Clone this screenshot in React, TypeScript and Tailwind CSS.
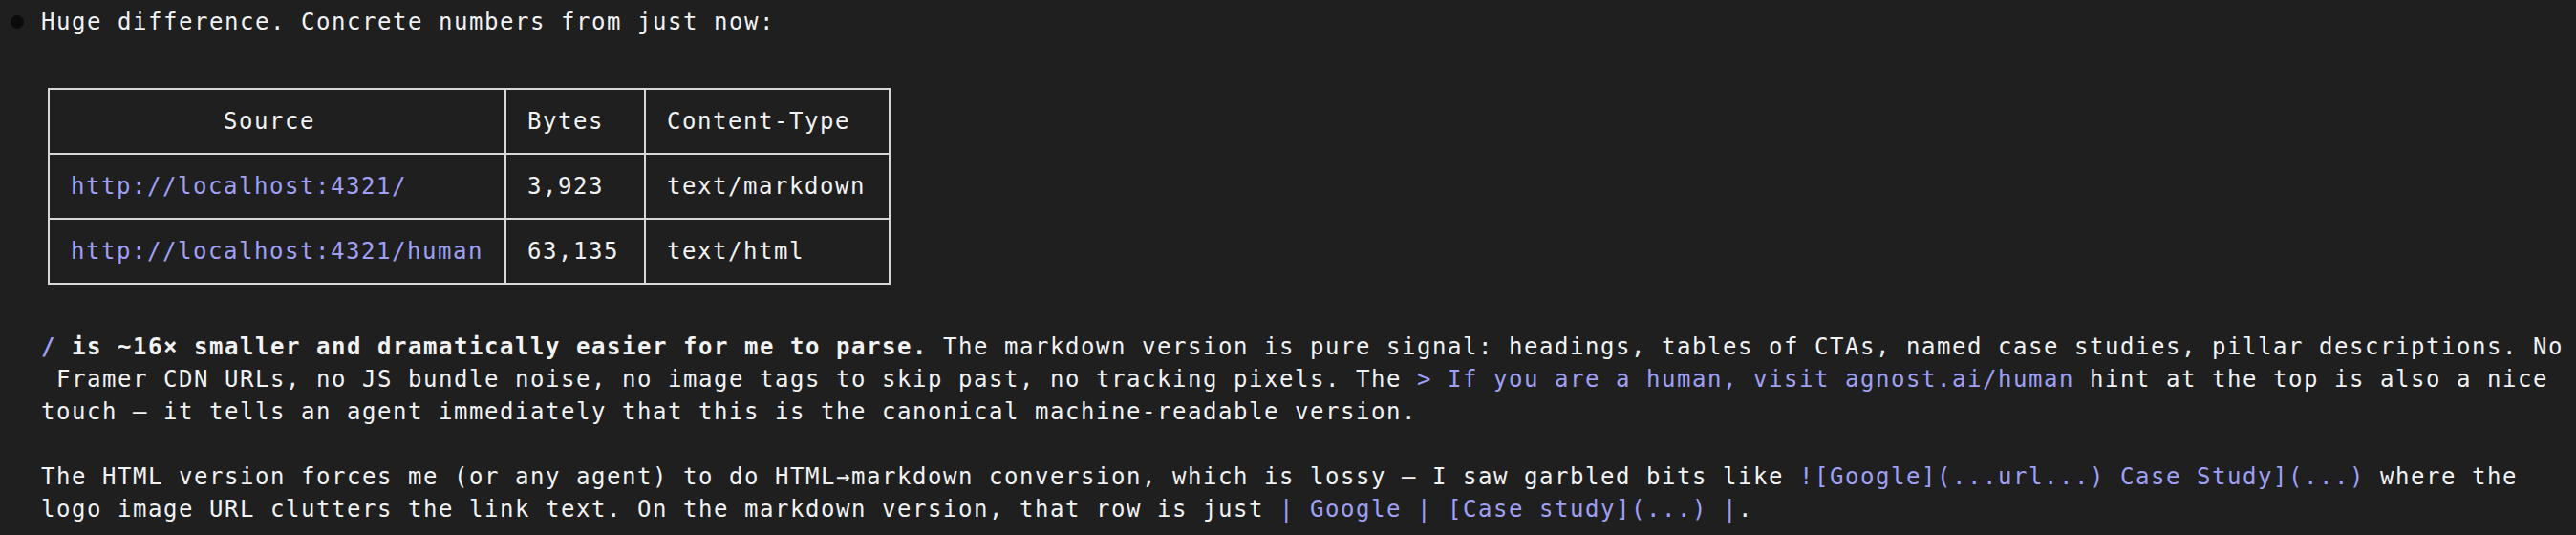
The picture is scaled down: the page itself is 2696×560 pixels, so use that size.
import React from "react";

const purple = "text-[#a0a0f5]";

const rows = [
  { source: "http://localhost:4321/", bytes: "3,923", type: "text/markdown" },
  { source: "http://localhost:4321/human", bytes: "63,135", type: "text/html" },
];

const Cell = ({ children, className = "" }: { children: React.ReactNode; className?: string }) => (
  <td className={`h-[68px] border-2 border-[#d8d8d8] pl-[22px] align-middle whitespace-pre ${className}`}>
    {children}
  </td>
);

const App = () => {
  return (
    <div
      className="h-[560px] w-full overflow-hidden bg-[#1f1f1f] pt-[6px] text-[24px] leading-[34px] tracking-[1.55px] text-[#f2f2f2]"
      style={{ fontFamily: '"DejaVu Sans Mono", monospace' }}
    >
      <div className="flex items-center">
        <div className="ml-[11px] mr-[18px] h-[14px] w-[14px] rounded-full bg-[#0b0b0b]" />
        <div className="whitespace-pre">Huge difference. Concrete numbers from just now:</div>
      </div>

      <div className="pl-[43px]">
        <table className="ml-[7px] mt-[52px] border-collapse">
          <thead>
            <tr>
              <Cell className="pr-[22px]">{"          Source"}</Cell>
              <Cell className="pr-[26px]">Bytes</Cell>
              <Cell className="pr-[24px]">Content-Type</Cell>
            </tr>
          </thead>
          <tbody>
            {rows.map((row) => (
              <tr key={row.source}>
                <Cell className={`pr-[22px] ${purple}`}>{row.source.padEnd(27, " ")}</Cell>
                <Cell className="pr-[26px]">{row.bytes.padEnd(6, " ")}</Cell>
                <Cell className="pr-[24px]">{row.type.padEnd(13, " ")}</Cell>
              </tr>
            ))}
          </tbody>
        </table>

        <div className="mt-[48px] whitespace-pre">
          <div>
            <span className={`font-bold ${purple}`}>/</span>
            <span className="font-bold"> is ~16× smaller and dramatically easier for me to parse.</span>
            <span> The markdown version is pure signal: headings, tables of CTAs, named case studies, pillar descriptions. No</span>
          </div>
          <div>
            {" Framer CDN URLs, no JS bundle noise, no image tags to skip past, no tracking pixels. The "}
            <span className={purple}>{"> If you are a human, visit agnost.ai/human"}</span>
            {" hint at the top is also a nice"}
          </div>
          <div>touch — it tells an agent immediately that this is the canonical machine-readable version.</div>
        </div>

        <div className="mt-[34px] whitespace-pre">
          <div>
            {"The HTML version forces me (or any agent) to do HTML→markdown conversion, which is lossy — I saw garbled bits like "}
            <span className={purple}>![Google](...url...) Case Study](...)</span>
            {" where the"}
          </div>
          <div>
            {"logo image URL clutters the link text. On the markdown version, that row is just "}
            <span className={purple}>| Google | [Case study](...) |</span>.
          </div>
        </div>
      </div>
    </div>
  );
};

export default App;
